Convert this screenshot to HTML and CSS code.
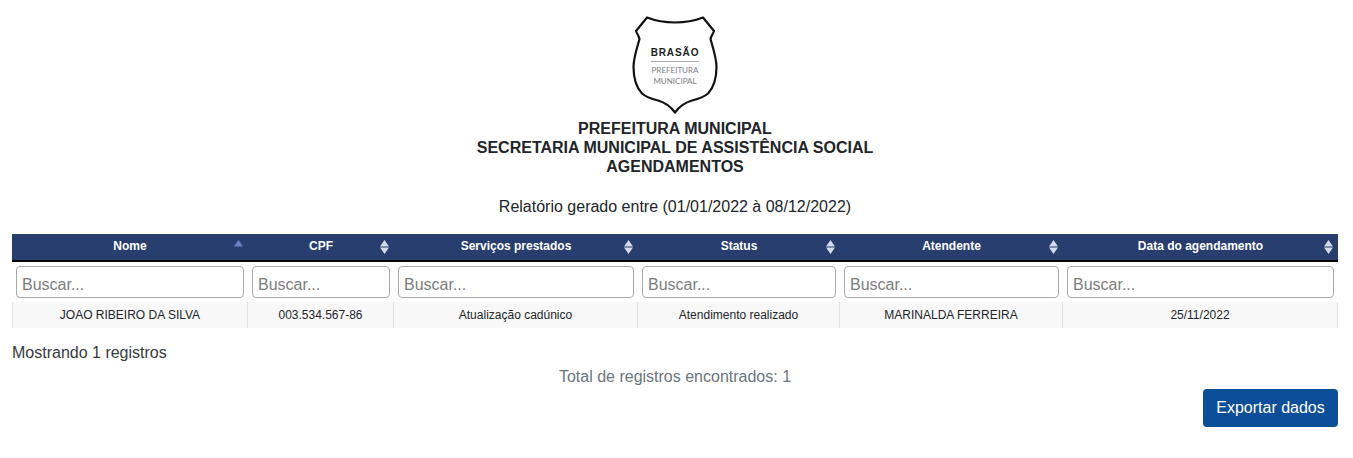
FILE: index.html
```html
<!DOCTYPE html>

<html>
  <head>
    <meta charset="UTF-8" />
    <meta name="viewport" content="width=device-width,initial-scale=1" />

    <title>Agendamentos</title>

    <link rel="stylesheet" href="styles.css">
  </head>

  <body>
    <header class="report-head">
      <svg class="crest" width="92" height="98" viewBox="0 0 92 98">
        <path class="crest-line" d="M18 1.5 C27 5 37 6.5 46 6.5 C55 6.5 65 5 74 1.5 L85 15 C84 18 82 20 81.5 23 C84 32 87.5 42 87.5 51 C87.5 62 85 71 79 77.5 C75 81 69 83 63 84.5 C56 86.5 50 91 46 96.5 C42 91 36 86.5 29 84.5 C23 83 17 81 13 77.5 C7 71 4.5 62 4.5 51 C4.5 42 8 32 10.5 23 C10 20 8 18 7 15 Z" />
        <text class="crest-title" x="46" y="40" text-anchor="middle">BRASÃO</text>
        <rect class="crest-rule" x="22" y="45" width="48" height="1" />
        <text class="crest-sub" x="46" y="57" text-anchor="middle">PREFEITURA</text>
        <text class="crest-sub" x="46" y="67.5" text-anchor="middle">MUNICIPAL</text>
      </svg>
      <h1>PREFEITURA MUNICIPAL<br>SECRETARIA MUNICIPAL DE ASSISTÊNCIA SOCIAL<br>AGENDAMENTOS</h1>
      <p class="period">Relatório gerado entre (01/01/2022 à 08/12/2022)</p>
    </header>

    <table class="report">
      <colgroup>
        <col class="col-name">
        <col class="col-cpf">
        <col class="col-service">
        <col class="col-status">
        <col class="col-agent">
        <col class="col-date">
      </colgroup>
      <thead>
        <tr class="titles">
          <th>Nome
            <svg class="sort" width="9" height="14" viewBox="0 0 9 14"><path class="sort-on" d="M4.5 0 L9 6.5 H0 Z" /></svg>
          </th>
          <th>CPF
            <svg class="sort" width="9" height="14" viewBox="0 0 9 14"><path d="M4.5 0 L9 6.5 H0 Z M0 7.5 H9 L4.5 14 Z" /></svg>
          </th>
          <th>Serviços prestados
            <svg class="sort" width="9" height="14" viewBox="0 0 9 14"><path d="M4.5 0 L9 6.5 H0 Z M0 7.5 H9 L4.5 14 Z" /></svg>
          </th>
          <th>Status
            <svg class="sort" width="9" height="14" viewBox="0 0 9 14"><path d="M4.5 0 L9 6.5 H0 Z M0 7.5 H9 L4.5 14 Z" /></svg>
          </th>
          <th>Atendente
            <svg class="sort" width="9" height="14" viewBox="0 0 9 14"><path d="M4.5 0 L9 6.5 H0 Z M0 7.5 H9 L4.5 14 Z" /></svg>
          </th>
          <th>Data do agendamento
            <svg class="sort" width="9" height="14" viewBox="0 0 9 14"><path d="M4.5 0 L9 6.5 H0 Z M0 7.5 H9 L4.5 14 Z" /></svg>
          </th>
        </tr>
        <tr class="filters">
          <td><input type="text" placeholder="Buscar..."></td>
          <td><input type="text" placeholder="Buscar..."></td>
          <td><input type="text" placeholder="Buscar..."></td>
          <td><input type="text" placeholder="Buscar..."></td>
          <td><input type="text" placeholder="Buscar..."></td>
          <td><input type="text" placeholder="Buscar..."></td>
        </tr>
      </thead>
      <tbody>
        <tr class="row">
          <td>JOAO RIBEIRO DA SILVA</td>
          <td>003.534.567-86</td>
          <td>Atualização cadúnico</td>
          <td>Atendimento realizado</td>
          <td>MARINALDA FERREIRA</td>
          <td>25/11/2022</td>
        </tr>
      </tbody>
    </table>

    <p class="showing">Mostrando 1 registros</p>
    <p class="total">Total de registros encontrados: 1</p>
    <div class="actions">
      <button type="button" class="export">Exportar dados</button>
    </div>
  </body>
</html>
```

FILE: styles.css
```css
:root {
  --color-navy: rgb(39 62 111);
  --color-blue: rgb(13 78 153);
  --color-text: rgb(33 37 41);
  --color-muted: rgb(108 117 125);
  --color-line: rgb(222 226 230);
  --font-family: "Liberation Sans", Arial, sans-serif;
}

* {
  box-sizing: border-box;
  margin: 0;
  padding: 0;
}

body {
  background-color: rgb(255 255 255);
  color: var(--color-text);
  font-family: var(--font-family);
  font-size: 16px;
  padding: 16px 15px 0 12px;
}

.report-head {
  align-items: center;
  display: flex;
  flex-direction: column;
  margin-bottom: 18px;
}

.crest {
  display: block;
  margin-bottom: 5px;
}

.crest-line {
  fill: rgb(255 255 255);
  stroke: rgb(17 17 17);
  stroke-width: 2.2;
  stroke-linejoin: round;
}

.crest-title {
  fill: rgb(30 30 30);
  font-size: 10px;
  font-weight: 700;
  letter-spacing: 0.9px;
}

.crest-rule {
  fill: rgb(170 170 170);
}

.crest-sub {
  fill: rgb(125 125 130);
  font-family: Lato, sans-serif;
  font-size: 8px;
}

h1 {
  font-size: 16px;
  font-weight: 700;
  line-height: 19px;
  text-align: center;
}

.period {
  line-height: 19px;
  margin-top: 21px;
}

.report {
  border-collapse: separate;
  border-spacing: 0;
  table-layout: fixed;
  width: 1326px;
}

.col-name { width: 236px; }
.col-cpf { width: 146px; }
.col-service { width: 244px; }
.col-status { width: 202px; }
.col-agent { width: 223px; }
.col-date { width: 275px; }

.titles th {
  background-color: var(--color-navy);
  border-bottom: 2px solid rgb(0 0 0);
  color: rgb(255 255 255);
  font-size: 12px;
  font-weight: 700;
  height: 28px;
  padding-bottom: 2px;
  position: relative;
  text-align: center;
}

.sort {
  fill: rgb(212 218 232);
  position: absolute;
  right: 5px;
  top: 6px;
}

.sort-on {
  fill: rgb(110 130 200);
}

.filters td {
  height: 40px;
  padding: 4px;
}

.filters input {
  border: 1px solid rgb(170 170 170);
  border-radius: 4px;
  color: var(--color-text);
  display: block;
  font-family: var(--font-family);
  font-size: 16px;
  height: 32px;
  padding: 5px 5px 0;
  width: 100%;
}

.filters input::placeholder {
  color: rgb(125 125 125);
}

.row td {
  background-color: rgb(248 248 248);
  border-right: 1px solid var(--color-line);
  font-size: 12px;
  height: 26px;
  text-align: center;
}

.row td:first-child {
  border-left: 1px solid var(--color-line);
}

.showing {
  color: rgb(55 58 62);
  line-height: 19px;
  margin-top: 15px;
}

.total {
  color: var(--color-muted);
  line-height: 19px;
  margin-top: 5px;
  text-align: center;
}

.actions {
  display: flex;
  justify-content: flex-end;
  margin-top: 3px;
}

.export {
  background-color: var(--color-blue);
  border: none;
  border-radius: 4px;
  color: rgb(255 255 255);
  font-family: var(--font-family);
  font-size: 16px;
  height: 38px;
  width: 135px;
}
```
